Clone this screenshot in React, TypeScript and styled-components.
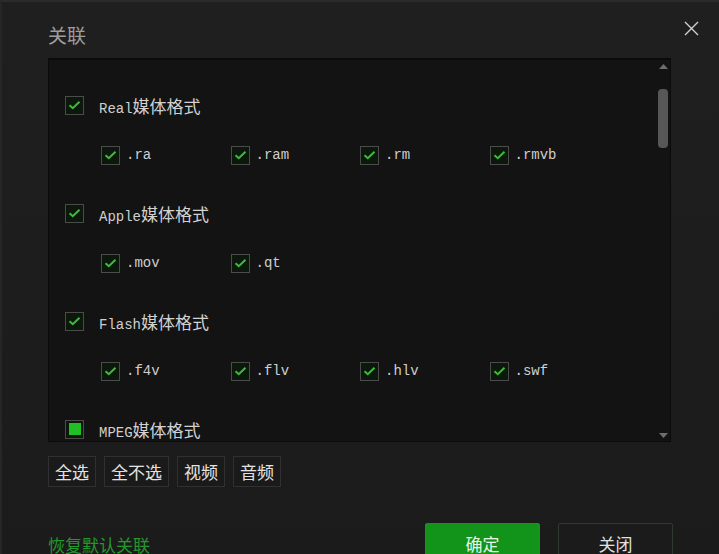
import React, { FunctionComponent } from "react";
import styled, { createGlobalStyle } from "styled-components";

type TFormatGroup = {
  name: string;
  label: string;
  exts: string[];
  partial?: boolean;
};

const groups: TFormatGroup[] = [
  { name: "Real", label: "媒体格式", exts: [".ra", ".ram", ".rm", ".rmvb"] },
  { name: "Apple", label: "媒体格式", exts: [".mov", ".qt"] },
  { name: "Flash", label: "媒体格式", exts: [".f4v", ".flv", ".hlv", ".swf"] },
  { name: "MPEG", label: "媒体格式", exts: [], partial: true },
];

const GlobalStyle = createGlobalStyle`
  html, body {
    margin: 0;
    padding: 0;
    background: #1c1c1c;
  }
  * {
    box-sizing: border-box;
  }
`;

const CJK = `"Noto Sans CJK SC", "Noto Sans", sans-serif`;
const MONO = `"Liberation Mono", "Noto Sans CJK SC", monospace`;

const StyledWindow = styled.div`
  width: 719px;
  height: 554px;
  overflow: hidden;
  background: linear-gradient(#1f1f1f, #1b1b1b);
  border-top: 2px solid #2b2b2b;
  border-left: 2px solid #262626;
  padding: 0 46px 0 46px;
  display: flex;
  flex-direction: column;
  font-family: ${CJK};

  & > * {
    flex-shrink: 0;
  }
`;

const StyledHeader = styled.div`
  height: 56px;
  display: flex;
  justify-content: space-between;
  align-items: flex-start;
  margin-right: -26px;
`;

const StyledTitle = styled.div`
  padding-top: 21px;
  font-size: 19px;
  line-height: 24px;
  color: #9e9e9e;
`;

const StyledClose = styled.button`
  margin-top: 19px;
  width: 15px;
  height: 15px;
  padding: 0;
  border: none;
  background: none;
  display: flex;
`;

const StyledListBox = styled.div`
  width: 623px;
  height: 384px;
  background: #131313;
  border: 1px solid #0b0b0b;
  border-top-width: 2px;
  display: flex;
  overflow: hidden;
`;

const StyledListContent = styled.div`
  flex: 1;
  padding: 35px 0 0 16px;
  display: flex;
  flex-direction: column;
`;

const StyledGroupRow = styled.div<{ $first: boolean }>`
  display: flex;
  align-items: center;
  height: 20px;
  margin-top: ${(p) => (p.$first ? 0 : 38)}px;
`;

const StyledSubRow = styled.div`
  display: grid;
  grid-template-columns: repeat(4, 129.5px);
  padding-left: 36px;
  margin-top: 30px;
  height: 20px;
`;

const StyledItem = styled.div`
  display: flex;
  align-items: center;
  gap: 6px;
`;

const StyledBox = styled.span`
  width: 19px;
  height: 19px;
  flex-shrink: 0;
  border: 1.5px solid #4b4b4b;
  background: #0d180d;
  display: flex;
  align-items: center;
  justify-content: center;
`;

const StyledPartial = styled.span`
  width: 12px;
  height: 12px;
  background: #1fbf25;
`;

const StyledGroupLabel = styled.span`
  margin-left: 15px;
  color: #d2d2d2;
  display: flex;
  align-items: baseline;
`;

const StyledLatin = styled.span`
  font-family: ${MONO};
  font-size: 14px;
  color: #cfcfcf;
`;

const StyledCjk = styled.span`
  font-family: ${CJK};
  font-size: 17px;
`;

const StyledScrollbar = styled.div`
  width: 14px;
  display: flex;
  flex-direction: column;
  align-items: center;
  padding: 4px 0 3px;
`;

const StyledThumb = styled.div`
  width: 10px;
  height: 59px;
  margin-top: 20px;
  border-radius: 4px;
  background: #575757;
`;

const StyledSpacer = styled.div`
  flex: 1;
`;

const StyledToolbar = styled.div`
  display: flex;
  gap: 8px;
  margin-top: 14px;
`;

const StyledToolButton = styled.button`
  height: 31px;
  padding: 0 6px;
  background: #1a1a1a;
  border: 1px solid #303030;
  color: #e2e2e2;
  font-family: ${CJK};
  font-size: 17px;
  line-height: 1;
`;

const StyledFooter = styled.div`
  display: flex;
  align-items: center;
  margin-top: 36px;
`;

const StyledLink = styled.span`
  flex: 1;
  padding-top: 3px;
  font-size: 17px;
  color: #23982c;
`;

const StyledAction = styled.button<{ $primary?: boolean }>`
  width: 115px;
  height: 40px;
  margin-left: ${(p) => (p.$primary ? 0 : 18)}px;
  border-radius: 2px;
  border: 1px solid ${(p) => (p.$primary ? "#14961c" : "#2e3a2f")};
  background: ${(p) => (p.$primary ? "#12941a" : "#1b1b1b")};
  color: ${(p) => (p.$primary ? "#e6f6e6" : "#e0e0e0")};
  font-family: ${CJK};
  font-size: 17px;
  padding: 0;
`;

const Check: FunctionComponent<{ partial?: boolean }> = ({ partial }) => (
  <StyledBox>
    {partial ? (
      <StyledPartial />
    ) : (
      <svg width="13" height="10" viewBox="0 0 13 10">
        <path d="M1.5 5.2 L4.8 8.2 L11.5 1.8" fill="none" stroke="#3dbb3d" strokeWidth="2" />
      </svg>
    )}
  </StyledBox>
);

const Triangle: FunctionComponent<{ down?: boolean }> = ({ down }) => (
  <svg width="9" height="5" viewBox="0 0 9 5">
    <path d={down ? "M0 0 H9 L4.5 5 Z" : "M0 5 H9 L4.5 0 Z"} fill="#6e6e6e" />
  </svg>
);

const App: FunctionComponent = () => {
  return (
    <>
      <GlobalStyle />
      <StyledWindow>
        <StyledHeader>
          <StyledTitle>关联</StyledTitle>
          <StyledClose aria-label="close">
            <svg width="15" height="15" viewBox="0 0 15 15">
              <path d="M1 1 L14 14 M14 1 L1 14" stroke="#d0d0d0" strokeWidth="1.4" />
            </svg>
          </StyledClose>
        </StyledHeader>

        <StyledListBox>
          <StyledListContent>
            {groups.map((group, i) => (
              <React.Fragment key={group.name}>
                <StyledGroupRow $first={i === 0}>
                  <Check partial={group.partial} />
                  <StyledGroupLabel>
                    <StyledLatin>{group.name}</StyledLatin>
                    <StyledCjk>{group.label}</StyledCjk>
                  </StyledGroupLabel>
                </StyledGroupRow>
                {group.exts.length > 0 && (
                  <StyledSubRow>
                    {group.exts.map((ext) => (
                      <StyledItem key={ext}>
                        <Check />
                        <StyledLatin>{ext}</StyledLatin>
                      </StyledItem>
                    ))}
                  </StyledSubRow>
                )}
              </React.Fragment>
            ))}
          </StyledListContent>
          <StyledScrollbar>
            <Triangle />
            <StyledThumb />
            <StyledSpacer />
            <Triangle down />
          </StyledScrollbar>
        </StyledListBox>

        <StyledToolbar>
          <StyledToolButton>全选</StyledToolButton>
          <StyledToolButton>全不选</StyledToolButton>
          <StyledToolButton>视频</StyledToolButton>
          <StyledToolButton>音频</StyledToolButton>
        </StyledToolbar>

        <StyledFooter>
          <StyledLink>恢复默认关联</StyledLink>
          <StyledAction $primary>确定</StyledAction>
          <StyledAction>关闭</StyledAction>
        </StyledFooter>
      </StyledWindow>
    </>
  );
};

export default App;
